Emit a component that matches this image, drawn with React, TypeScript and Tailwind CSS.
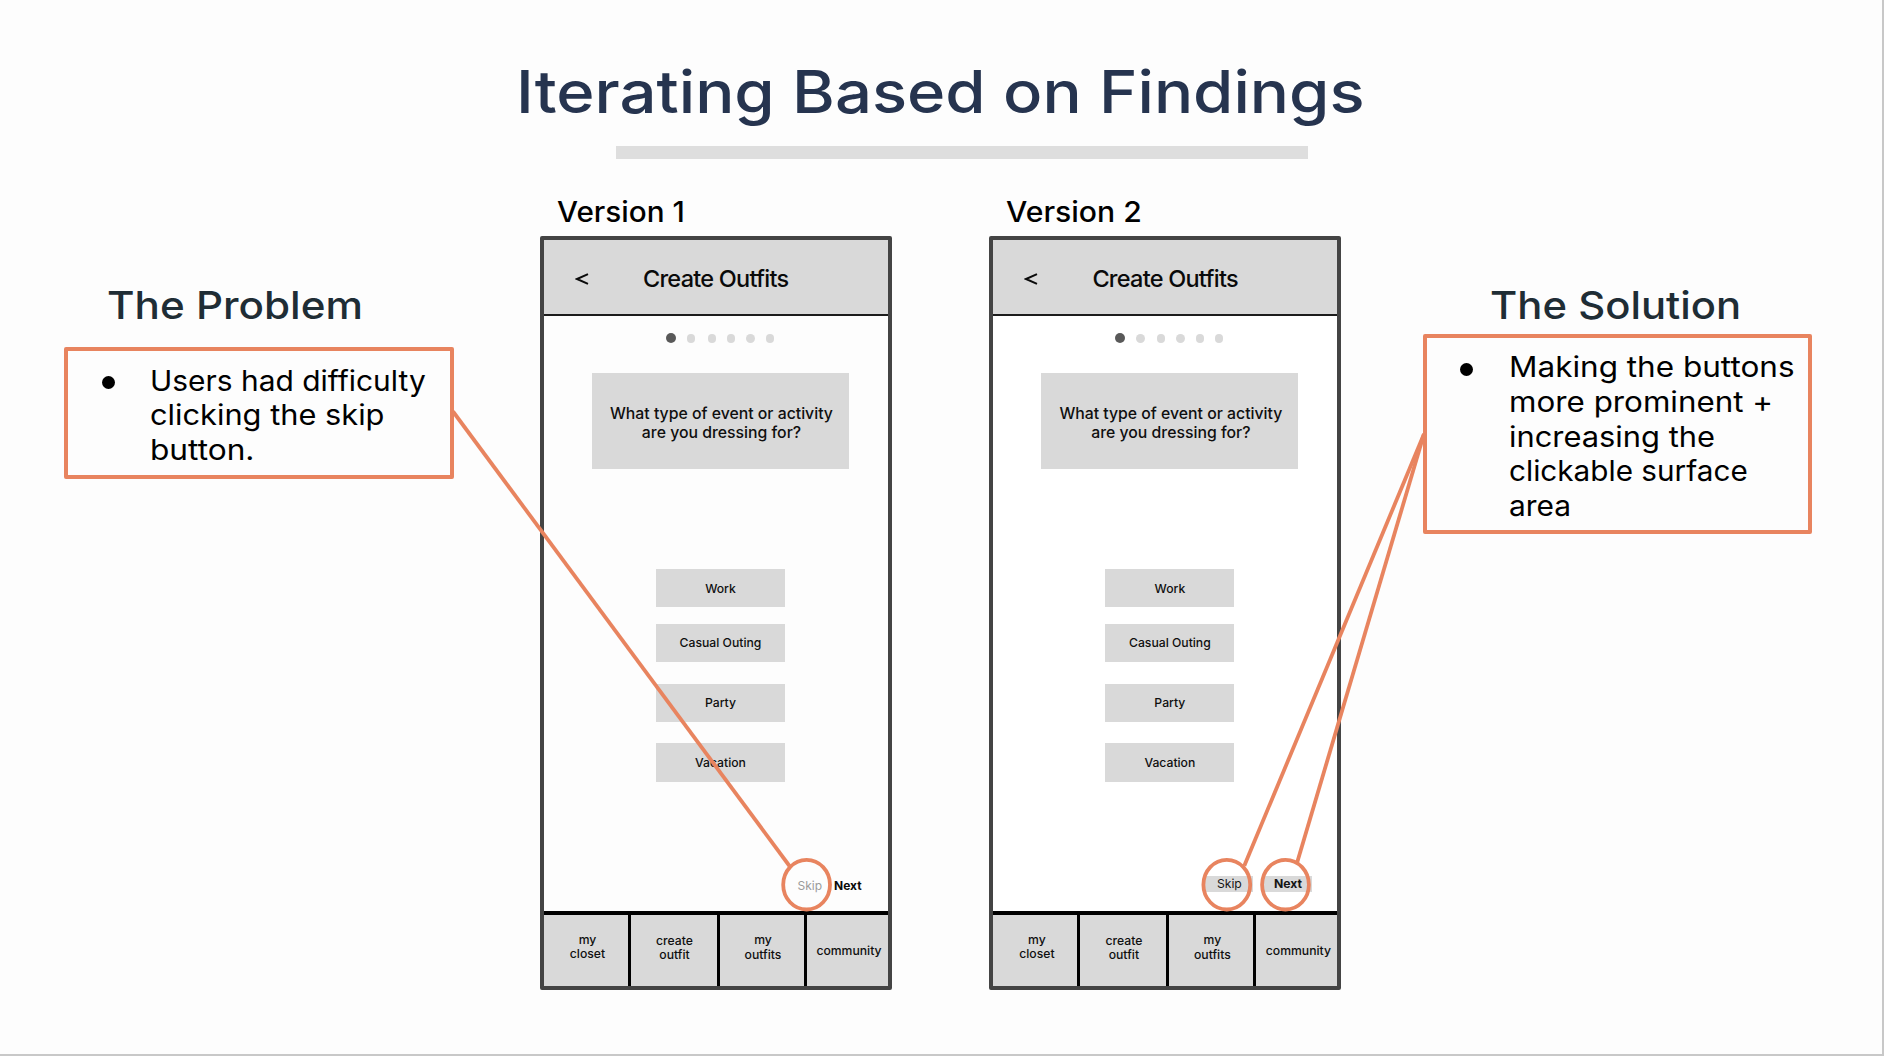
import React from 'react';

interface PhoneProps {
  title: string;
  className: string;
  titleClass: string;
  screenClass: string;
  children: React.ReactNode;
}

interface Line {
  text: string;
  className: string;
}

const options = [
  { label: 'Work', className: 'mt-[100px] pt-px' },
  { label: 'Casual Outing', className: 'mt-[16.5px]' },
  { label: 'Party', className: 'mt-[21.5px]' },
  { label: 'Vacation', className: 'mt-[21px]' },
];

const dots = ['ml-[11px]', 'ml-[12.5px]', 'ml-[11px]', 'ml-[11px]', 'ml-[11px]'];

const problemLines: Line[] = [
  { text: 'Users had difficulty', className: 'scale-x-[1.05]' },
  { text: 'clicking the skip', className: 'scale-x-[1.08]' },
  { text: 'button.', className: 'scale-x-[1.11]' },
];

const solutionLines: Line[] = [
  { text: 'Making the buttons', className: 'scale-x-[1.105]' },
  { text: 'more prominent +', className: 'scale-x-[1.1]' },
  { text: 'increasing the', className: 'scale-x-[1.083]' },
  { text: 'clickable surface', className: 'scale-x-[1.042]' },
  { text: 'area', className: 'scale-x-[1.05]' },
];

function Phone({ title, className, titleClass, screenClass, children }: PhoneProps) {
  return (
    <section className={className}>
      <h3 className={`ml-[17px] pt-[38.3px] origin-left whitespace-nowrap text-[28px] leading-[30px] font-medium text-black ${titleClass}`}>{title}</h3>
      <div className={`mt-[9.2px] flex h-[754.5px] w-[352px] flex-col rounded-[2px] border-4 border-[#444444] ${screenClass}`}>
        <div className="flex h-[76px] shrink-0 items-center border-b-2 border-[#1c1c1c] bg-[#d9d9d9] text-[#0a0a0a]">
          <svg className="ml-[31px] mt-[4px] h-[12px] w-[14px]" viewBox="0 0 14 12" fill="none" stroke="#0a0a0a" strokeWidth="2">
            <path d="M13 1.2 L2 6 L13 10.8" />
          </svg>
          <span className="ml-[54px] mt-[4px] whitespace-nowrap text-[23.5px] leading-[28px] font-medium tracking-[-0.75px]">Create Outfits</span>
        </div>

        <div className="mt-[17.5px] ml-[122px] flex h-[10px] shrink-0 items-center">
          <span className="h-[10px] w-[10px] rounded-full bg-[#595959]" />
          {dots.map((dot, index) => (
            <span key={index} className={`h-[8.3px] w-[8.3px] rounded-full bg-[#d9d9d9] ${dot}`} />
          ))}
        </div>

        <div className="mt-[29.5px] ml-[48px] flex h-[96px] w-[257px] shrink-0 items-center justify-center bg-[#d9d9d9] pt-[5px] pl-[2px] text-center text-[15.8px] leading-[19.3px] font-medium whitespace-nowrap text-[#0f0f0f]">
          What type of event or activity
          <br />
          are you dressing for?
        </div>

        {options.map((option) => (
          <div
            key={option.label}
            className={`ml-[112px] flex h-[38.5px] w-[129px] shrink-0 items-center justify-center bg-[#d9d9d9] text-[12.2px] leading-[14px] font-medium text-[#0f0f0f] ${option.className}`}
          >
            {option.label}
          </div>
        ))}

        {children}

        <div className="mt-auto flex h-[75.8px] shrink-0 border-t-4 border-black bg-[#d9d9d9] text-center text-[12.2px] leading-[14.5px] font-medium text-[#0f0f0f]">
          <div className="w-[87px] border-r-[3px] border-black pt-[18px] pl-[3px]">
            my
            <br />
            closet
          </div>
          <div className="w-[89px] border-r-[3px] border-black pt-[19px] pl-[1px]">
            create
            <br />
            outfit
          </div>
          <div className="w-[87px] border-r-[3px] border-black pt-[18.5px] pl-[2px]">
            my
            <br />
            outfits
          </div>
          <div className="w-[81px] pt-[29px] pl-[3px]">community</div>
        </div>
      </div>
    </section>
  );
}

function Bullet({ className, lines }: { className: string; lines: Line[] }) {
  return (
    <div className={`flex w-[389.6px] rounded-[2px] border-4 border-[#e8845f] ${className}`}>
      <span className="mt-[12.5px] ml-[33.5px] h-[13px] w-[13px] shrink-0 rounded-full bg-black" />
      <p className="ml-[35.5px] whitespace-nowrap text-[28.5px] leading-[34.6px] text-black">
        {lines.map((line) => (
          <span key={line.text} className={`block w-fit origin-left ${line.className}`}>
            {line.text}
          </span>
        ))}
      </p>
    </div>
  );
}

export default function App() {
  return (
    <div className="relative h-[1056px] w-[1884px] overflow-hidden border-r-2 border-b-2 border-[#c8c8c8] bg-[#fdfdfd] font-['Inter',sans-serif]">
      <header className="flex flex-col pt-[61.5px]">
        <h1 className="ml-[515.5px] w-fit origin-left scale-x-[1.105] whitespace-nowrap text-[59px] leading-[60px] font-medium text-[#26344f]">Iterating Based on Findings</h1>
        <div className="mt-[24px] ml-[616px] h-[13px] w-[692px] bg-[#dedede]" />
      </header>

      <main className="flex">
        <section className="ml-[64px] w-[389.6px]">
          <h2 className="ml-[42.5px] w-fit origin-left scale-x-[1.11] pt-[126.7px] whitespace-nowrap text-[38px] leading-[40px] font-medium text-[#1f2d35]">The Problem</h2>
          <Bullet className="mt-[21.5px] h-[132.6px] pt-[13px]" lines={problemLines} />
        </section>

        <Phone title="Version 1" className="ml-[86.4px] w-[352px]" titleClass="w-fit scale-x-[1.06]" screenClass="bg-[#fdfdfd]">
          <div className="mt-[94.5px] flex h-[16px] shrink-0 text-[12px] leading-[16px] whitespace-nowrap">
            <span className="mt-[2px] ml-[253.5px] w-[36.5px] text-[#9b9b9b]">Skip</span>
            <span className="mt-[2px] font-bold text-[#0a0a0a]">Next</span>
          </div>
        </Phone>

        <Phone title="Version 2" className="ml-[97.4px] w-[352px]" titleClass="w-fit scale-x-[1.075]" screenClass="bg-white">
          <div className="mt-[94.5px] flex h-[16px] shrink-0 text-[12.2px] leading-[16px] whitespace-nowrap text-[#151515]">
            <span className="ml-[212px] w-[48px] bg-[#d9d9d9] pl-[11.5px]">Skip</span>
            <span className="ml-[11px] w-[48px] bg-[#d9d9d9] pl-[9.5px] font-bold">Next</span>
          </div>
        </Phone>

        <section className="ml-[81.3px] w-[389.6px]">
          <h2 className="ml-[67.5px] w-fit origin-left scale-x-[1.1] pt-[126.7px] whitespace-nowrap text-[38px] leading-[40px] font-medium text-[#1f2d35]">The Solution</h2>
          <Bullet className="mt-[8.5px] h-[200.7px] pt-[12.8px]" lines={solutionLines} />
        </section>
      </main>

      {/* callout lines and rings over the screens */}
      <svg className="pointer-events-none absolute top-0 left-0" width="1884" height="1056" fill="none" stroke="#e8845f" strokeWidth="3.8">
        <path d="M453 411.5 L789.5 866" />
        <path d="M1424 434 L1244.3 865.7" />
        <path d="M1424 434 L1297.3 862" />
        <ellipse cx="806.6" cy="884.7" rx="23.4" ry="24.8" />
        <ellipse cx="1226.8" cy="884.7" rx="23.4" ry="24.8" />
        <ellipse cx="1285.5" cy="884.7" rx="23.4" ry="24.8" />
      </svg>
    </div>
  );
}
